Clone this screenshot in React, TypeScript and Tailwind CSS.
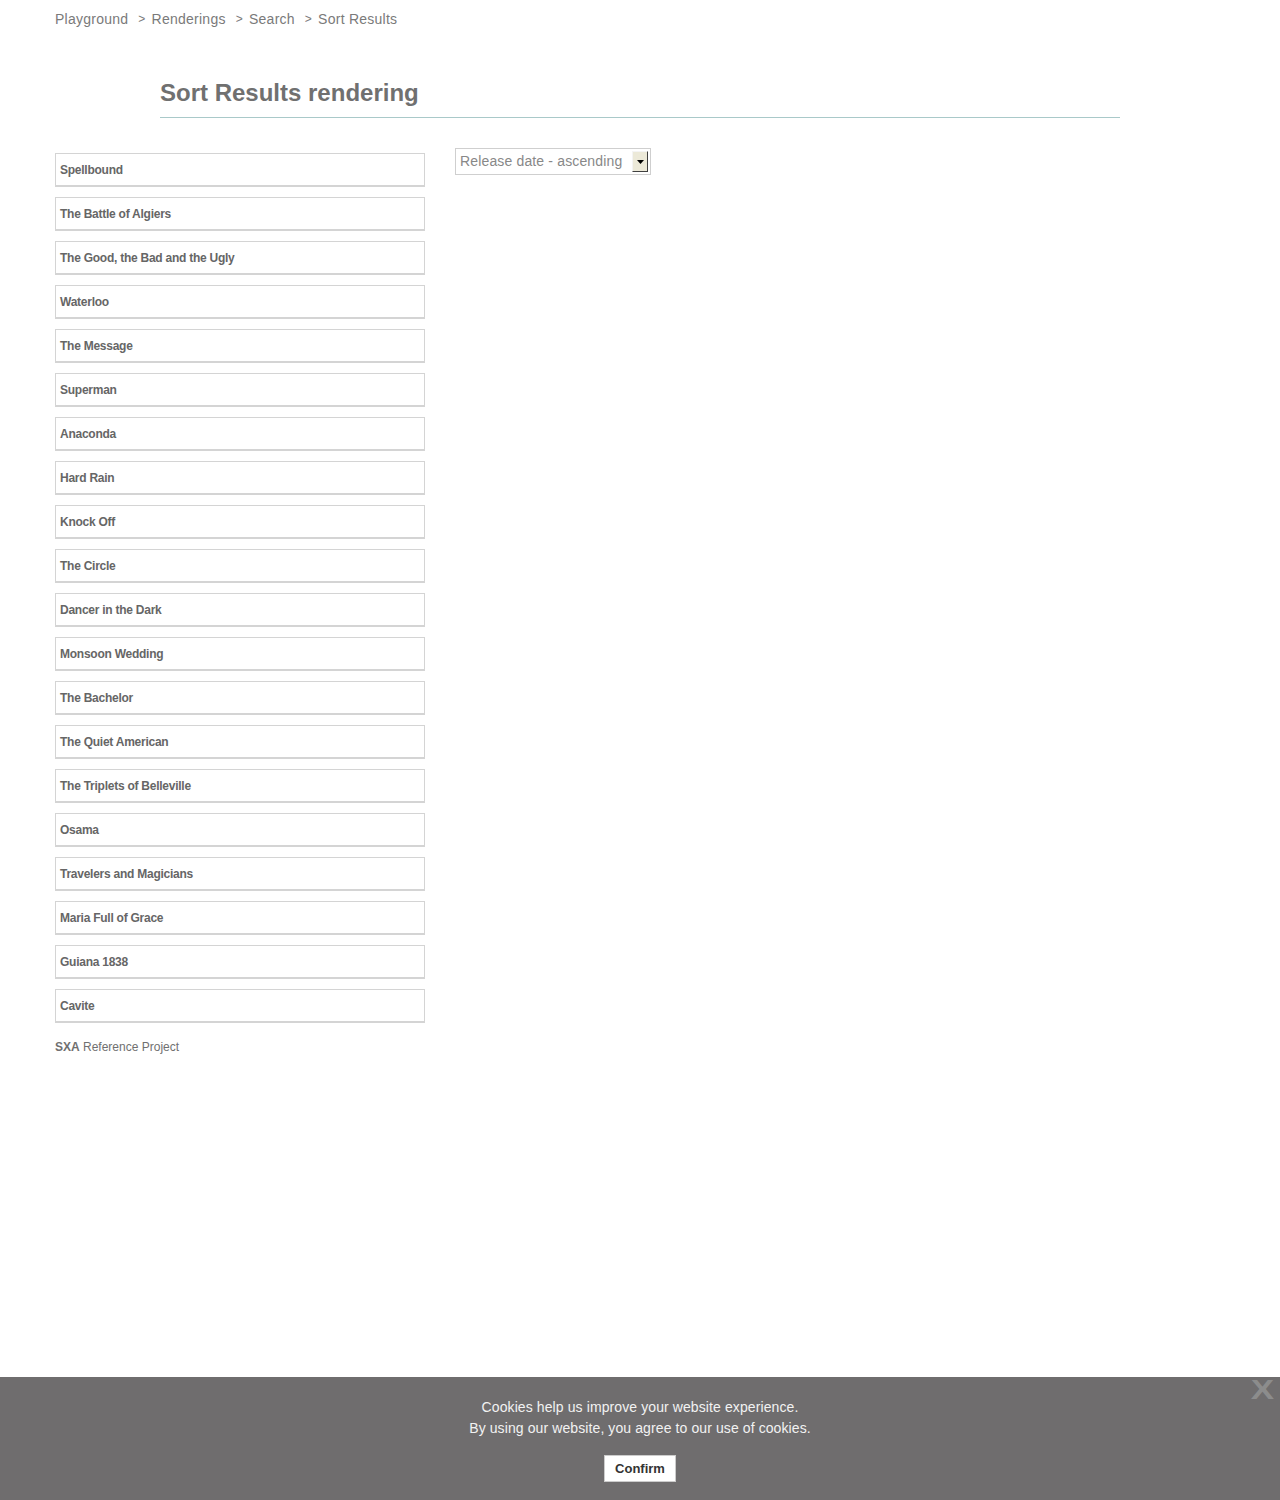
import React from "react";

const movies = [
  "Spellbound",
  "The Battle of Algiers",
  "The Good, the Bad and the Ugly",
  "Waterloo",
  "The Message",
  "Superman",
  "Anaconda",
  "Hard Rain",
  "Knock Off",
  "The Circle",
  "Dancer in the Dark",
  "Monsoon Wedding",
  "The Bachelor",
  "The Quiet American",
  "The Triplets of Belleville",
  "Osama",
  "Travelers and Magicians",
  "Maria Full of Grace",
  "Guiana 1838",
  "Cavite",
];

const crumbs = ["Playground", "Renderings", "Search", "Sort Results"];

export default function App() {
  return (
    <div
      className="relative min-h-[1500px] bg-white text-[#707070]"
      style={{ fontFamily: '"Liberation Sans", Arial, sans-serif' }}
    >
      <div className="px-[55px]">
        {/* breadcrumb */}
        <nav className="flex items-center pt-[10px] text-[14px] leading-[18px] tracking-[0.25px] text-[#7a7a7a]">
          {crumbs.map((c, i) => (
            <span key={c} className="flex items-center">
              {i > 0 && <span className="ml-[10px] mr-[6px] text-[12px]">&gt;</span>}
              <span>{c}</span>
            </span>
          ))}
        </nav>

        <div className="mx-[105px] mt-[51px] border-b border-[#a9c9c9] pb-[10px]">
          <h1 className="text-[24px] font-bold leading-[28px] text-[#707070]">Sort Results rendering</h1>
        </div>

        <div className="mt-[35px] flex items-start gap-[30px]">
          <ul className="flex w-[370px] flex-col gap-[10px]">
            {movies.map((m) => (
              <li
                key={m}
                className="h-[34px] border border-b-2 border-[#d4d4d4] px-[4px] pt-[9px] text-[12px] font-bold leading-[14px] tracking-[-0.25px] text-[#666]"
              >
                {m}
              </li>
            ))}
          </ul>

          <div className="-mt-[5px] flex h-[27px] w-[196px] items-center border border-[#cfcfcf] pl-[4px] pr-[2px]">
            <span className="flex-1 text-[14px] tracking-[0.15px] text-[#888]">Release date - ascending</span>
            <span className="flex h-[21px] w-[16px] items-center justify-center border border-t-[#f4f4f4] border-l-[#f4f4f4] border-r-[#404040] border-b-[#404040] bg-[#ece9d8]">
              <svg width="7" height="4" viewBox="0 0 7 4">
                <path d="M0 0h7L3.5 4z" fill="#000" />
              </svg>
            </span>
          </div>
        </div>

        <p className="mt-[17px] text-[12px] leading-[14px] text-[#707070]">
          <span className="font-bold">SXA</span> Reference Project
        </p>
      </div>

      {/* cookie bar */}
      <div className="absolute bottom-0 left-0 right-0 h-[123px] bg-[#6f6d6e] text-center">
        <span className="absolute right-[8px] top-[-3px] scale-x-125 text-[28px] font-bold leading-[32px] text-[#8c8c8c]">X</span>
        <p className="pt-[20px] text-[14px] leading-[21px] tracking-[0.1px] text-[#f2f2f2]">
          Cookies help us improve your website experience.
          <br />
          By using our website, you agree to our use of cookies.
        </p>
        <button className="mt-[16px] h-[27px] w-[72px] border border-[#ccc] bg-white text-[13px] font-bold text-[#333]">
          Confirm
        </button>
      </div>
    </div>
  );
}
